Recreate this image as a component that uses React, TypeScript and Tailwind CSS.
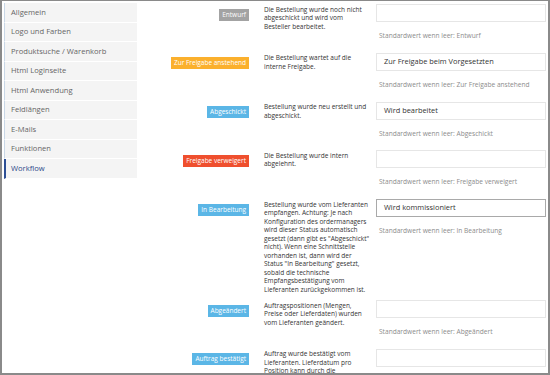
const menu = [
  "Allgemein",
  "Logo und Farben",
  "Produktsuche / Warenkorb",
  "Html Loginseite",
  "Html Anwendung",
  "Feldlängen",
  "E-Mails",
  "Funktionen",
  "Workflow",
];

type Status = {
  label: string;
  color: string;
  desc: string[];
  value: string;
  focused?: boolean;
  noHelp?: boolean;
};

const statuses: Status[] = [
  {
    label: "Entwurf",
    color: "bg-[#a3a3a3]",
    desc: ["Die Bestellung wurde noch nicht", "abgeschickt und wird vom", "Besteller bearbeitet."],
    value: "",
  },
  {
    label: "Zur Freigabe anstehend",
    color: "bg-[#fbb02d]",
    desc: ["Die Bestellung wartet auf die", "interne Freigabe."],
    value: "Zur Freigabe beim Vorgesetzten",
  },
  {
    label: "Abgeschickt",
    color: "bg-[#5bb6e6]",
    desc: ["Bestellung wurde neu erstellt und", "abgeschickt."],
    value: "Wird bearbeitet",
  },
  {
    label: "Freigabe verweigert",
    color: "bg-[#ef4f2e]",
    desc: ["Die Bestellung wurde intern", "abgelehnt."],
    value: "",
  },
  {
    label: "In Bearbeitung",
    color: "bg-[#5bb6e6]",
    desc: [
      "Bestellung wurde vom Lieferanten",
      "empfangen. Achtung: Je nach",
      "Konfiguration des ordermanagers",
      "wird dieser Status automatisch",
      "gesetzt (dann gibt es \"Abgeschickt\"",
      "nicht). Wenn eine Schnittstelle",
      "vorhanden ist, dann wird der",
      "Status \"In Bearbeitung\" gesetzt,",
      "sobald die technische",
      "Empfangsbestätigung vom",
      "Lieferanten zurückgekommen ist.",
    ],
    value: "Wird kommissioniert",
    focused: true,
  },
  {
    label: "Abgeändert",
    color: "bg-[#5bb6e6]",
    desc: ["Auftragspositionen (Mengen,", "Preise oder Lieferdaten) wurden", "vom Lieferanten geändert."],
    value: "",
  },
  {
    label: "Auftrag bestätigt",
    color: "bg-[#5bb6e6]",
    desc: ["Auftrag wurde bestätigt vom", "Lieferanten. Lieferdatum pro", "Position kann durch die"],
    value: "",
    // help line sits below the visible area
    noHelp: true,
  },
];

export default function App() {
  return (
    <div
      className="w-[550px] h-[375px] overflow-hidden bg-white border-[#8a8a8a] border-t border-l-2 border-r-2 border-b-2 flex items-start"
      style={{ fontFamily: '"Open Sans", "Noto Sans", sans-serif' }}
    >
      {/* sidebar */}
      <div className="ml-[2px] mt-[2px] w-[133px] flex flex-col">
        {menu.map((item) => (
          <div
            key={item}
            className={`${
              item === "Workflow"
                ? "border-l-2 border-[#2d4f95] text-[#2d4a8a] pl-[5px]"
                : "border-l border-[#c9d7e6] text-[#666] pl-[6px]"
            } h-[19.5px] flex items-center bg-[#f4f4f4] border-b border-b-white text-[7.6px]`}
          >
            {item}
          </div>
        ))}
      </div>

      {/* workflow list */}
      <div className="flex-1 ml-[3px] pr-[2px] pt-[3px] flex flex-col">
        {statuses.map((s) => (
          <div key={s.label} className="flex items-start pb-[6px]">
            <div className="w-[109px] flex justify-end pt-[4.5px]">
              <span className={`${s.color} text-white text-[6.5px] leading-[12px] h-[12px] px-[3px] whitespace-nowrap`}>
                {s.label}
              </span>
            </div>

            <div className="w-[106px] ml-[15px] mt-[1.5px] text-[6.5px] leading-[8.5px] text-[#333]">
              {s.desc.map((line) => (
                <div key={line} className="whitespace-nowrap">
                  {line}
                </div>
              ))}
            </div>

            <div className="flex-1 ml-[6px] flex flex-col">
              <div
                className={`${
                  s.focused ? "border-[#a9a9a9]" : "border-[#e6e6e6]"
                } h-[18px] border flex items-center pl-[7px] text-[7.4px] text-[#333]`}
              >
                {s.value}
              </div>
              {!s.noHelp && (
                <p className="mt-[9px] mb-[5.75px] ml-[3px] text-[6.6px] leading-[10px] text-[#8c8c8c]">
                  Standardwert wenn leer: {s.label}
                </p>
              )}
            </div>
          </div>
        ))}
      </div>
    </div>
  );
}
